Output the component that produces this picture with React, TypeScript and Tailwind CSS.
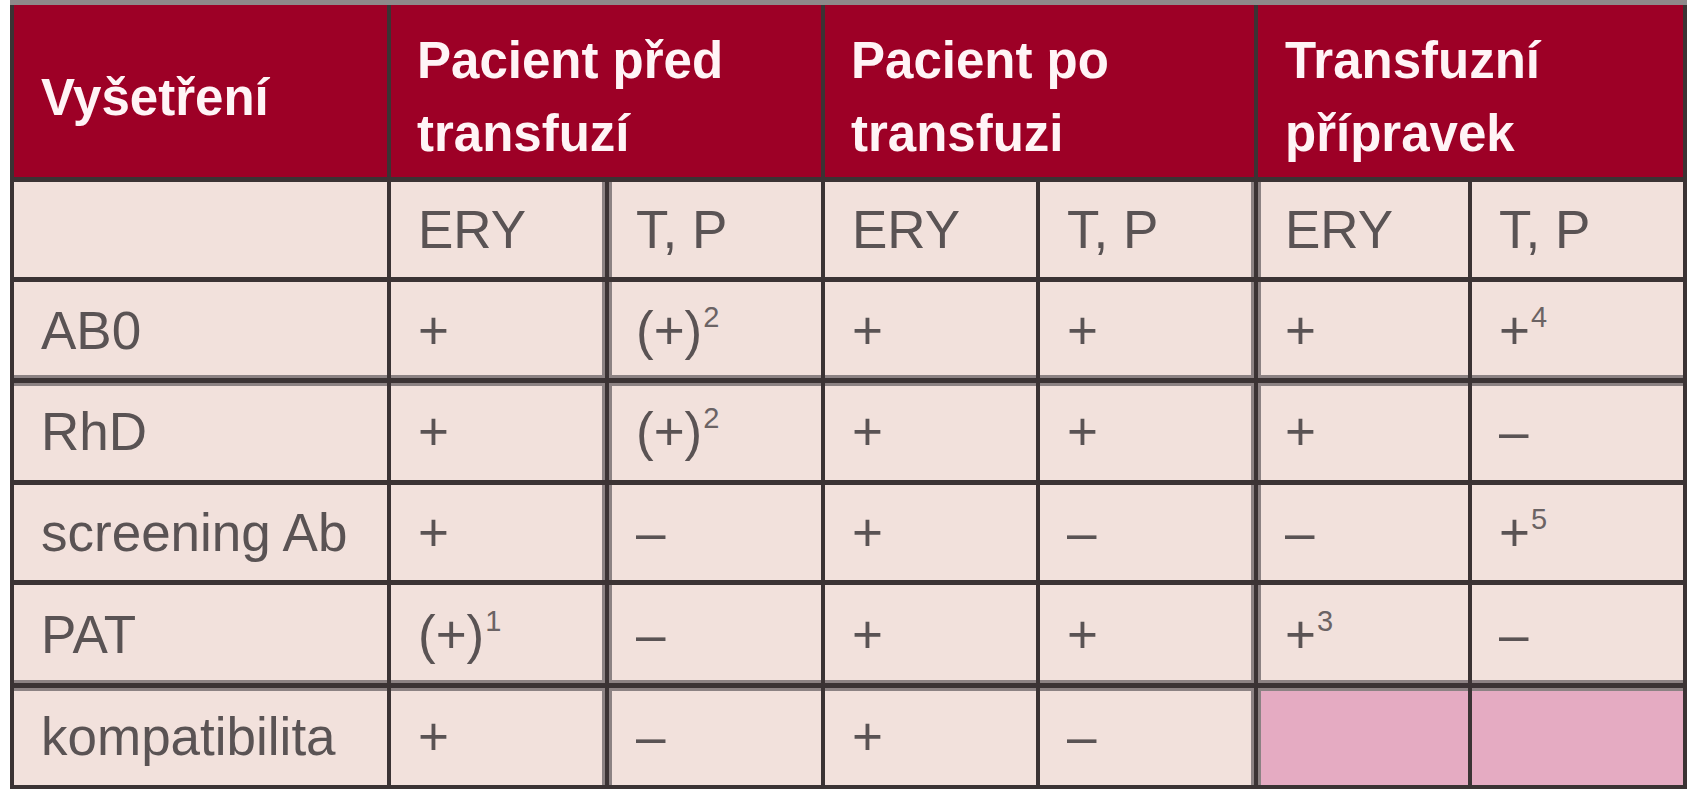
import React from "react";

type Cell = string | [string, string] | null;

const rows: Cell[][] = [
  ["", "ERY", "T, P", "ERY", "T, P", "ERY", "T, P"],
  ["AB0", "+", ["(+)", "2"], "+", "+", "+", ["+", "4"]],
  ["RhD", "+", ["(+)", "2"], "+", "+", "+", "–"],
  ["screening Ab", "+", "–", "+", "–", "–", ["+", "5"]],
  ["PAT", ["(+)", "1"], "–", "+", "+", ["+", "3"], "–"],
  ["kompatibilita", "+", "–", "+", "–", null, null],
];

const SH: Record<string, string> = {
  "": "",
  T: "shadow-[inset_0_3px_0_#8c8283]",
  B: "shadow-[inset_0_-3px_0_#8c8283]",
  L: "shadow-[inset_3px_0_0_#8c8283]",
  R: "shadow-[inset_-3px_0_0_#8c8283]",
  TL: "shadow-[inset_0_3px_0_#8c8283,inset_3px_0_0_#8c8283]",
  TR: "shadow-[inset_0_3px_0_#8c8283,inset_-3px_0_0_#8c8283]",
  BL: "shadow-[inset_0_-3px_0_#8c8283,inset_3px_0_0_#8c8283]",
  BR: "shadow-[inset_0_-3px_0_#8c8283,inset_-3px_0_0_#8c8283]",
};

function shadowKey(r: number, c: number): string {
  let v = "";
  if (r === 3 || r === 6) v += "T";
  else if (r === 2 || r === 5) v += "B";
  if (c === 2 || c === 5) v += "L";
  else if (c === 1 || c === 4) v += "R";
  return v;
}

function Content({ cell }: { cell: Cell }) {
  if (cell === null) return null;
  if (typeof cell === "string") return <span>{cell}</span>;
  return (
    <span className="whitespace-nowrap">
      {cell[0]}
      <span className="relative top-[-22px] ml-[1px] text-[29px] text-[#6b6364]">{cell[1]}</span>
    </span>
  );
}

export default function App() {
  return (
    <div className="min-h-screen bg-white pl-[10px] font-['Liberation_Sans',Arial,sans-serif]">
      <div className="inline-grid grid-cols-[373px_214px_212px_211px_214px_210px_211px] grid-rows-[172px_95px_96px_97px_95px_98px_97px] gap-x-[4px] gap-y-[5px] bg-[#3b3334] px-[4px] pb-[4px] border-t-[5px] border-[#8e898a]">
        <div className="flex items-center bg-[#9d0026] pl-[27px] pt-[12px] text-[51px] font-bold leading-[73px] text-[#fff4f6]">
          Vyšetření
        </div>
        <div className="col-span-2 flex items-center bg-[#9d0026] pl-[26px] pt-[12px] text-[51px] font-bold leading-[73px] text-[#fff4f6]">
          <div>
            Pacient před
            <br />
            transfuzí
          </div>
        </div>
        <div className="col-span-2 flex items-center bg-[#9d0026] pl-[26px] pt-[12px] text-[51px] font-bold leading-[73px] text-[#fff4f6]">
          <div>
            Pacient po
            <br />
            transfuzi
          </div>
        </div>
        <div className="col-span-2 flex items-center bg-[#9d0026] pl-[27px] pt-[12px] text-[51px] font-bold leading-[73px] text-[#fff4f6]">
          <div>
            Transfuzní
            <br />
            přípravek
          </div>
        </div>
        {rows.map((row, ri) =>
          row.map((cell, ci) => (
            <div
              key={`${ri}-${ci}`}
              className={`flex items-center pl-[27px] text-[53px] leading-none text-[#5a5354] ${
                cell === null ? "bg-[#e5abc2]" : "bg-[#f2e1dc]"
              } ${SH[shadowKey(ri + 1, ci)]}`}
            >
              <Content cell={cell} />
            </div>
          ))
        )}
      </div>
    </div>
  );
}
